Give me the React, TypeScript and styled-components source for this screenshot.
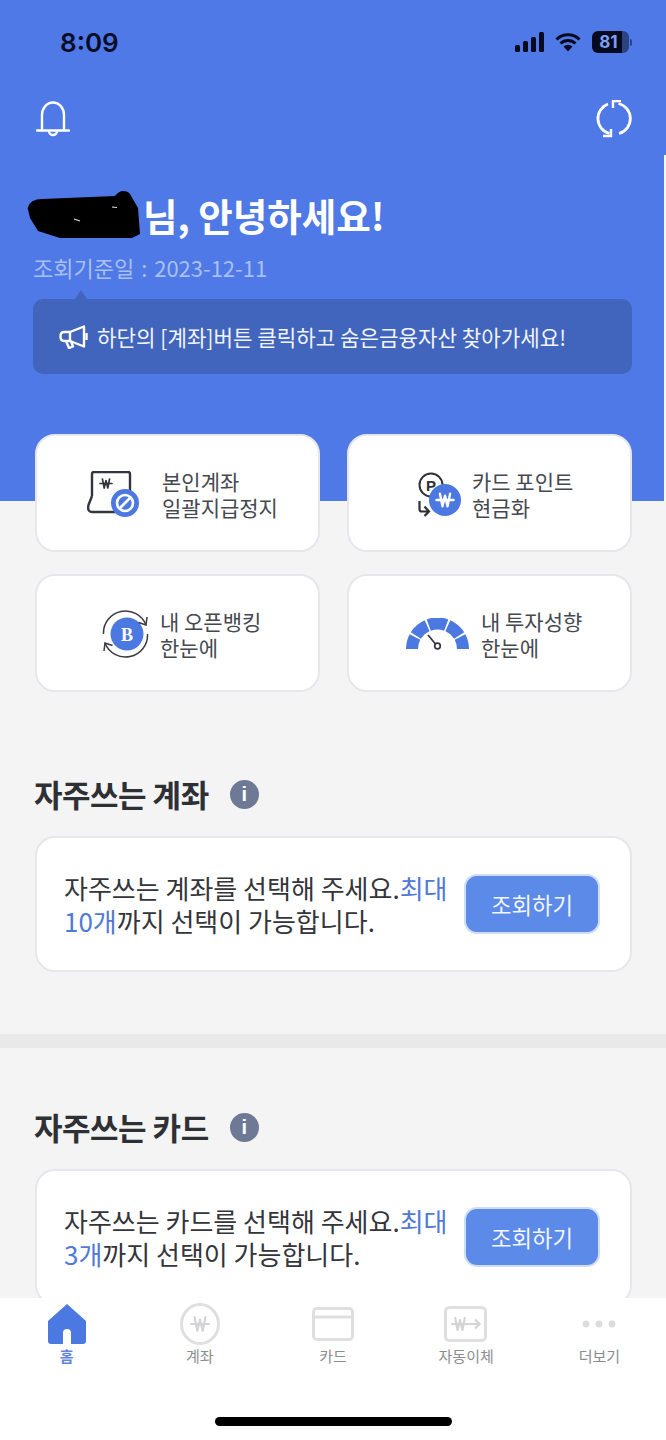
import React from "react";
import styled, { createGlobalStyle } from "styled-components";

const BLUE = "#4f79e6";
const ICON_BLUE = "#4c78e2";
const KR = `"Noto Sans CJK KR", "Noto Sans", sans-serif`;

const GlobalStyles = createGlobalStyle`
  * { box-sizing: border-box; }
  html, body { margin: 0; padding: 0; background: #f4f4f5; }
  body { font-family: ${KR}; }
`;

const Page = styled.div`
  position: relative;
  width: 666px;
  height: 1440px;
  display: flex;
  flex-direction: column;
  overflow: hidden;
  background: #f4f4f5;
`;

const Scroller = styled.main`
  flex: 1;
  min-height: 0;
  overflow: hidden;
  background: linear-gradient(${BLUE} 501px, #f4f4f5 501px);
`;

const ScrollThumb = styled.div`
  position: absolute;
  top: 155px;
  right: 0;
  width: 2px;
  height: 346px;
  background: #f4f6fd;
`;

const StatusBar = styled.div`
  height: 86px;
  padding: 31px 34px 0 60px;
  display: flex;
  justify-content: space-between;
  align-items: flex-start;
`;

const Clock = styled.div`
  font-family: "Inter", "Liberation Sans", sans-serif;
  font-size: 26px;
  line-height: 24px;
  font-weight: 600;
  color: #080c26;
`;

const StatusIcons = styled.div`
  display: flex;
  align-items: center;
  gap: 11px;
`;

const BatteryBody = styled.div`
  width: 37px;
  height: 22px;
  border-radius: 6px;
  background: linear-gradient(90deg, #060a20 81%, #2c4382 81%);
  color: #7f9ff0;
  font-family: "Inter", "Liberation Sans", sans-serif;
  font-size: 17px;
  font-weight: 700;
  line-height: 22px;
  text-align: center;
  padding-right: 4px;
`;

const BatteryWrap = styled.div`
  display: flex;
  align-items: center;
  gap: 1px;
`;

const BatteryNub = styled.div`
  width: 2px;
  height: 7px;
  border-radius: 0 2px 2px 0;
  background: #2c4382;
`;

const Toolbar = styled.div`
  height: 60px;
  padding: 14px 34px 0 36px;
  display: flex;
  justify-content: space-between;
  align-items: flex-start;
`;

const Hero = styled.section`
  padding: 42px 34px 0 33px;
`;

const Greeting = styled.h1`
  margin: 0;
  height: 54px;
  display: flex;
  align-items: center;
  color: #fff;
  font-size: 37.5px;
  line-height: 54px;
  font-weight: 700;
`;

const Scribble = styled.svg`
  flex: none;
  margin-left: -6px;
`;

const QueryDate = styled.div`
  margin-top: 9px;
  height: 32px;
  color: #a9bff4;
  font-size: 22px;
  line-height: 32px;
  word-spacing: 2px;
`;

const Notice = styled.div`
  position: relative;
  margin-top: 16px;
  height: 75px;
  padding: 0 0 0 26px;
  display: flex;
  align-items: center;
  gap: 9px;
  border-radius: 10px;
  background: #4164bc;
  color: #f1f4fc;
  font-size: 21.2px;

  &::before {
    content: "";
    position: absolute;
    left: 42px;
    top: -9px;
    border-left: 6px solid transparent;
    border-right: 6px solid transparent;
    border-bottom: 9px solid #4164bc;
  }
`;

const QuickGrid = styled.div`
  margin-top: 60px;
  padding: 0 34px 0 35px;
  display: grid;
  grid-template-columns: 285px 285px;
  grid-auto-rows: 118px;
  column-gap: 27px;
  row-gap: 22px;
`;

const QuickCard = styled.a<{ $inset: number; $gap: number }>`
  display: flex;
  align-items: center;
  padding: 2px 0 0 ${(p) => p.$inset}px;
  gap: ${(p) => p.$gap}px;
  background: #fff;
  border: 2px solid #e6e7ea;
  border-radius: 20px;
  color: #45484f;
  font-size: 21px;
  line-height: 26px;
`;

const Section = styled.section`
  padding: 0 34px 0 35px;
`;

const SectionHead = styled.div<{ $top: number }>`
  margin-top: ${(p) => p.$top}px;
  margin-left: -1px;
  height: 44px;
  display: flex;
  align-items: center;
  gap: 21px;
`;

const SectionTitle = styled.h2`
  margin: 0;
  color: #2f3033;
  font-size: 31px;
  line-height: 44px;
  font-weight: 700;
  letter-spacing: -0.5px;
`;

const InfoDot = styled.span`
  width: 29px;
  height: 29px;
  border-radius: 50%;
  background: #6e7a95;
  color: #fff;
  display: flex;
  align-items: center;
  justify-content: center;
  font-family: "Liberation Sans", sans-serif;
  font-size: 20px;
  font-weight: 700;
`;

const SelectCard = styled.div`
  margin-top: 20px;
  height: 136px;
  padding: 0 30px 0 27px;
  display: flex;
  align-items: center;
  justify-content: space-between;
  background: #fff;
  border: 2px solid #e6e7ea;
  border-radius: 20px;
`;

const SelectText = styled.p`
  margin: 0;
  color: #33353a;
  font-size: 26px;
  line-height: 33px;
`;

const Accent = styled.span`
  color: #4f7ad6;
`;

const QueryButton = styled.button`
  flex: none;
  width: 136px;
  height: 60px;
  padding: 0;
  border: 2px solid #cfdcf8;
  border-radius: 13px;
  background: #5b8ae8;
  color: #f2f6fe;
  font-family: ${KR};
  font-size: 22.3px;
`;

const Divider = styled.div`
  margin-top: 62px;
  height: 14px;
  background: #e9e9ea;
`;

const TabBar = styled.nav`
  flex: none;
  position: relative;
  height: 142px;
  background: #fff;
`;

const TabRow = styled.div`
  padding: 5px 0 0;
  display: grid;
  grid-template-columns: repeat(5, 133.2px);
`;

const Tab = styled.div<{ $active?: boolean }>`
  display: flex;
  flex-direction: column;
  align-items: center;
  color: ${(p) => (p.$active ? "#5f85e2" : "#8b8c90")};
  font-size: 15px;
  font-weight: ${(p) => (p.$active ? 700 : 400)};
  line-height: 22px;
`;

const TabIcon = styled.div`
  height: 42px;
  display: flex;
  align-items: center;
  justify-content: center;
`;

const HomeIndicator = styled.div`
  position: absolute;
  left: 215px;
  top: 119px;
  width: 237px;
  height: 9px;
  border-radius: 5px;
  background: #000;
`;

const WonMark = ({ x, y, s, color, w = 2 }: { x: number; y: number; s: number; color: string; w?: number }) => (
  <g fill="none" stroke={color} strokeWidth={w} strokeLinecap="round" strokeLinejoin="round">
    <path d={`M${x - s * 0.6} ${y - s * 0.75}L${x - s * 0.3} ${y + s * 0.75}L${x} ${y - s * 0.5}L${x + s * 0.3} ${y + s * 0.75}L${x + s * 0.6} ${y - s * 0.75}`} />
    <path d={`M${x - s} ${y}H${x + s}`} />
  </g>
);

const LaptopIcon = () => (
  <svg width="52" height="47" viewBox="0 0 52 47">
    <path d="M5 25V3A2 2 0 0 1 7 1H41A2 2 0 0 1 43 3V24M5 25L1.5 34Q0 41 5 41H28" fill="none" stroke="#33363c" strokeWidth="2.4" strokeLinejoin="round" />
    <WonMark x={19} y={12.5} s={6} color="#33363c" w={1.7} />
    <circle cx="38" cy="32" r="14" fill={ICON_BLUE} />
    <circle cx="38" cy="32" r="8" fill="none" stroke="#fff" strokeWidth="2.6" />
    <path d="M32.5 37.5L43.5 26.5" stroke="#fff" strokeWidth="2.6" />
  </svg>
);

const PointIcon = () => (
  <svg width="45" height="45" viewBox="0 0 45 45">
    <circle cx="14" cy="13" r="11.5" fill="none" stroke="#2e3035" strokeWidth="2" />
    <text x="14" y="18.5" fontFamily="Liberation Sans, sans-serif" fontWeight="700" fontSize="15" fill="#2e3035" textAnchor="middle">P</text>
    <path d="M2.5 29V37.5Q2.5 39.5 5 39.5H11M7.5 34.5L12 39.5L7.5 44" fill="none" stroke="#2e3035" strokeWidth="2.2" />
    <circle cx="28" cy="28" r="16" fill={ICON_BLUE} />
    <WonMark x={28} y={28} s={8.5} color="#fff" w={2.4} />
  </svg>
);

const BankIcon = () => (
  <svg width="48" height="48" viewBox="0 0 48 48">
    <circle cx="25" cy="24" r="16.5" fill={ICON_BLUE} />
    <text x="25" y="30.5" fontFamily="Liberation Serif, serif" fontWeight="700" fontSize="18" fill="#fff" textAnchor="middle">B</text>
    <path d="M1.5 24A22 22 0 0 1 44 15M45.5 24A22 22 0 0 1 3 33" fill="none" stroke="#3a3c41" strokeWidth="1.5" />
    <path d="M45 7L44 15L36.5 12.5M2 41L3 33L10.5 35.5" fill="none" stroke="#3a3c41" strokeWidth="1.5" />
  </svg>
);

// one band of the gauge, angles in degrees counted from the right-hand baseline
const gaugeBand = (from: number, to: number) => {
  const pt = (r: number, a: number) => {
    const rad = (a * Math.PI) / 180;
    return `${(31.5 + r * Math.cos(rad)).toFixed(2)} ${(31 - r * Math.sin(rad)).toFixed(2)}`;
  };
  return `M${pt(31.5, from)}A31.5 31.5 0 0 0 ${pt(31.5, to)}L${pt(19.5, to)}A19.5 19.5 0 0 1 ${pt(19.5, from)}Z`;
};

const GaugeIcon = () => (
  <svg width="63" height="32" viewBox="0 0 63 32">
    {[
      [180, 152],
      [148, 114],
      [110, 70],
      [66, 32],
      [28, 0],
    ].map(([a, b]) => (
      <path key={a} d={gaugeBand(b, a)} fill={ICON_BLUE} />
    ))}
    <path d="M22 17L29.5 26" stroke="#33363c" strokeWidth="1.7" />
    <circle cx="31.5" cy="28" r="2.8" fill="#fff" stroke="#33363c" strokeWidth="1.7" />
  </svg>
);

const App: React.FC = () => {
  return (
    <>
      <GlobalStyles />
      <Page>
        <Scroller>
          <StatusBar>
            <Clock>8:09</Clock>
            <StatusIcons>
              <svg width="29" height="20" viewBox="0 0 29 20" fill="#060a20">
                <rect x="0" y="13" width="5" height="7" rx="1.5" />
                <rect x="8" y="9" width="5" height="11" rx="1.5" />
                <rect x="16" y="5" width="5" height="15" rx="1.5" />
                <rect x="24" y="0" width="5" height="20" rx="1.5" />
              </svg>
              <svg width="26" height="20" viewBox="0 0 26 20">
                <path d="M1.5 7.5A16.5 16.5 0 0 1 24.5 7.5M5.5 11.5A11 11 0 0 1 20.5 11.5" fill="none" stroke="#060a20" strokeWidth="3" />
                <path d="M8.5 14.5A6.5 6.5 0 0 1 17.5 14.5L13 19.5Z" fill="#060a20" />
              </svg>
              <BatteryWrap>
                <BatteryBody>81</BatteryBody>
                <BatteryNub />
              </BatteryWrap>
            </StatusIcons>
          </StatusBar>

          <Toolbar>
            <svg width="34" height="37" viewBox="0 0 34 37" fill="none" stroke="#fff" strokeWidth="2.4">
              <path d="M6 30V15A11 12.5 0 0 1 28 15V30" />
              <path d="M1 30.5H33" strokeLinecap="round" />
              <path d="M13 31A4 4 0 0 0 21 31" />
            </svg>
            <svg width="36" height="38" viewBox="0 0 36 38" fill="none" stroke="#fff" strokeWidth="2.8">
              <path d="M12 4A15.5 15.5 0 0 0 13.5 33.5" />
              <path d="M23 33.5A15.5 15.5 0 0 0 22.5 3.5" />
              <path d="M25 1H17V8" strokeWidth="2.4" />
              <path d="M7 36H15V29" strokeWidth="2.4" />
            </svg>
          </Toolbar>

          <Hero>
            <Greeting>
              <Scribble width="116" height="48" viewBox="0 0 116 48">
                <path d="M0.6 17Q3 8 15 8L88 5Q92 0 96 0Q101 0 103 3L111 17L113 43L105 47H33L11 40L3 27Z" fill="#000" />
                <path d="M47 28L53 30M85 16L90 16.5" stroke="#e2e2e2" strokeWidth="1.2" />
              </Scribble>
              님, 안녕하세요!
            </Greeting>
            <QueryDate>조회기준일 : 2023-12-11</QueryDate>
            <Notice>
              <svg width="29" height="24" viewBox="0 0 29 24" fill="none" stroke="#fff" strokeWidth="2.4" strokeLinejoin="round">
                <path d="M25 1.5L11 7H5Q1.5 7 1.5 11.5Q1.5 16 5 16H11L25 21.5Z" />
                <path d="M7 16L10 23L14 21.5L12 16M27.5 8V15M11 7V16" />
              </svg>
              하단의 [계좌]버튼 클릭하고 숨은금융자산 찾아가세요!
            </Notice>
          </Hero>

          <QuickGrid>
            <QuickCard $inset={50} $gap={23}>
              <LaptopIcon />
              <span>본인계좌<br />일괄지급정지</span>
            </QuickCard>
            <QuickCard $inset={68} $gap={10}>
              <PointIcon />
              <span>카드 포인트<br />현금화</span>
            </QuickCard>
            <QuickCard $inset={65} $gap={10}>
              <BankIcon />
              <span>내 오픈뱅킹<br />한눈에</span>
            </QuickCard>
            <QuickCard $inset={57} $gap={12}>
              <GaugeIcon />
              <span>내 투자성향<br />한눈에</span>
            </QuickCard>
          </QuickGrid>

          <Section>
            <SectionHead $top={80}>
              <SectionTitle>자주쓰는 계좌</SectionTitle>
              <InfoDot>i</InfoDot>
            </SectionHead>
            <SelectCard>
              <SelectText>
                자주쓰는 계좌를 선택해 주세요.<Accent>최대</Accent>
                <br />
                <Accent>10개</Accent>까지 선택이 가능합니다.
              </SelectText>
              <QueryButton>조회하기</QueryButton>
            </SelectCard>
          </Section>

          <Divider />

          <Section>
            <SectionHead $top={57}>
              <SectionTitle>자주쓰는 카드</SectionTitle>
              <InfoDot>i</InfoDot>
            </SectionHead>
            <SelectCard>
              <SelectText>
                자주쓰는 카드를 선택해 주세요.<Accent>최대</Accent>
                <br />
                <Accent>3개</Accent>까지 선택이 가능합니다.
              </SelectText>
              <QueryButton>조회하기</QueryButton>
            </SelectCard>
          </Section>
        </Scroller>

        <ScrollThumb />

        <TabBar>
          <TabRow>
            <Tab $active>
              <TabIcon>
                <svg width="38" height="40" viewBox="0 0 38 40">
                  <path fill={ICON_BLUE} d="M19 0L38 17V37Q38 40 35 40H23V29Q23 25 19 25Q15 25 15 29V40H3Q0 40 0 37V17Z" />
                </svg>
              </TabIcon>
              <span>홈</span>
            </Tab>
            <Tab>
              <TabIcon>
                <svg width="40" height="42" viewBox="0 0 40 42">
                  <ellipse cx="20" cy="21" rx="18.5" ry="19.5" fill="none" stroke="#dfdfe0" strokeWidth="3" />
                  <WonMark x={20} y={21} s={9} color="#d4d4d6" w={2.2} />
                </svg>
              </TabIcon>
              <span>계좌</span>
            </Tab>
            <Tab>
              <TabIcon>
                <svg width="42" height="34" viewBox="0 0 42 34" fill="none" stroke="#dfdfe0" strokeWidth="3">
                  <rect x="1.5" y="1.5" width="39" height="31" rx="3.5" />
                  <path d="M1.5 10H40.5" />
                </svg>
              </TabIcon>
              <span>카드</span>
            </Tab>
            <Tab>
              <TabIcon>
                <svg width="44" height="36" viewBox="0 0 44 36" fill="none">
                  <rect x="1.5" y="1.5" width="40" height="33" rx="4" stroke="#dfdfe0" strokeWidth="3" />
                  <WonMark x={16} y={18} s={8} color="#d4d4d6" w={2.2} />
                  <path d="M24 18H35M31 13.5L35.5 18L31 22.5" stroke="#d4d4d6" strokeWidth="2.2" />
                </svg>
              </TabIcon>
              <span>자동이체</span>
            </Tab>
            <Tab>
              <TabIcon>
                <svg width="34" height="8" viewBox="0 0 34 8" fill="#dcdcde">
                  <circle cx="4" cy="4" r="3.4" />
                  <circle cx="17" cy="4" r="3.4" />
                  <circle cx="30" cy="4" r="3.4" />
                </svg>
              </TabIcon>
              <span>더보기</span>
            </Tab>
          </TabRow>
          <HomeIndicator />
        </TabBar>
      </Page>
    </>
  );
};

export default App;
